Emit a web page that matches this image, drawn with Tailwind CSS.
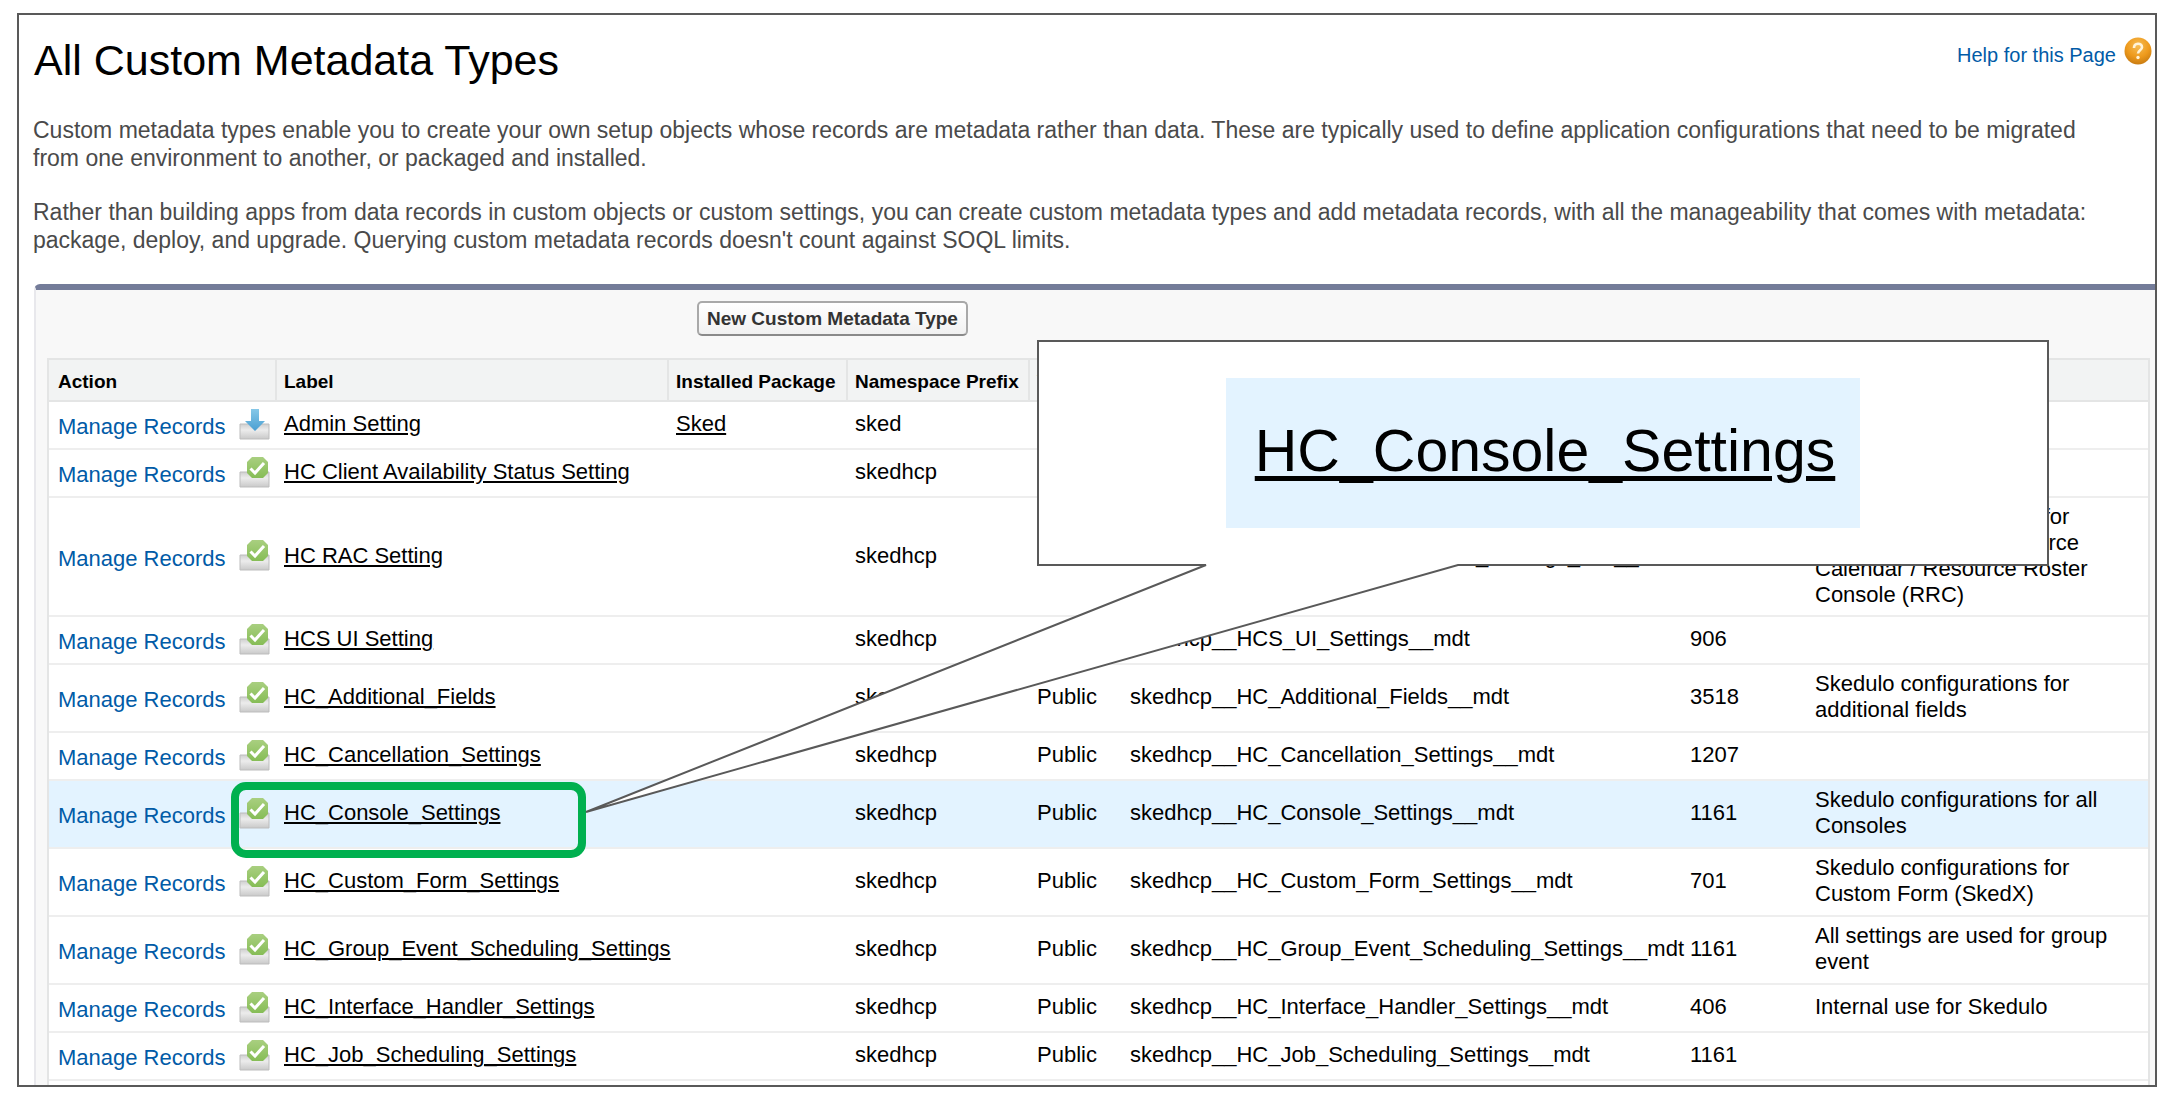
<!DOCTYPE html>
<html lang="en">
<head>
<meta charset="utf-8">
<title>All Custom Metadata Types</title>
<script src="https://cdn.jsdelivr.net/npm/@tailwindcss/browser@4"></script>
</head>
<body class="relative flex h-screen flex-col overflow-hidden bg-white px-[17px] pt-[13px] pb-[9px] font-['Liberation_Sans',Arial,sans-serif] text-black">

<svg class="absolute size-0" aria-hidden="true">
  <defs>
    <linearGradient id="tray" x1="0" y1="0" x2="0" y2="1"><stop offset="0" stop-color="#cfcfcf"/><stop offset=".4" stop-color="#ececec"/><stop offset="1" stop-color="#c9c9c9"/></linearGradient>
    <linearGradient id="green" x1="0" y1="0" x2="0" y2="1"><stop offset="0" stop-color="#a9cf80"/><stop offset="1" stop-color="#86bd56"/></linearGradient>
    <linearGradient id="blue" x1="0" y1="0" x2="0" y2="1"><stop offset="0" stop-color="#86c8e8"/><stop offset="1" stop-color="#4a9fd2"/></linearGradient>
    <radialGradient id="orange" cx=".5" cy=".3" r=".7"><stop offset="0" stop-color="#f6bd55"/><stop offset=".6" stop-color="#ee9a1c"/><stop offset="1" stop-color="#c97c12"/></radialGradient>
  </defs>
  <symbol id="ico-installed" viewBox="0 0 31 31">
    <path d="M1 15h29v15H1z" fill="url(#tray)" stroke="#bdbdbd"/>
    <path d="M12 0h8v12h6L16 22 6 12h6z" fill="url(#blue)"/>
  </symbol>
  <symbol id="ico-managed" viewBox="0 0 31 31">
    <path d="M1 15h29v15H1z" fill="url(#tray)" stroke="#bdbdbd"/>
    <path d="M13 0h11l5 5v11l-5 5H13l-5-5V5z" fill="url(#green)"/>
    <path d="M11.500 11.500l4.500 4.500 9-10" fill="none" stroke="#fff" stroke-width="3"/>
  </symbol>
</svg>

<main class="flex min-h-0 flex-1 flex-col overflow-hidden border-2 border-[#595959]">
  <header class="flex items-start justify-between pt-5 pr-[3px] pl-[15px]">
    <h1 class="text-[43px] leading-[50px]">All Custom Metadata Types</h1>
    <a href="#help" class="flex items-center gap-2 pt-1.5 text-xl text-[#015ba7]">Help for this Page
      <svg class="-mt-2 size-7" viewBox="0 0 28 28" aria-hidden="true"><circle cx="14" cy="14" r="13.500" fill="url(#orange)"/><path d="M10 11c0-5.500 8-5.500 8-.8 0 3-4 3-4 6.300" fill="none" stroke="#fff3d8" stroke-width="2.600"/><circle cx="14" cy="20.500" r="1.700" fill="#fff3d8"/></svg>
    </a>
  </header>

  <div class="mt-[31px] flex flex-col gap-[26px] pr-9 pl-[14px] text-[23px] leading-7 text-[#4a4a4a]">
    <p>Custom metadata types enable you to create your own setup objects whose records are metadata rather than data. These are typically used to define application configurations that need to be migrated from one environment to another, or packaged and installed.</p>
    <p>Rather than building apps from data records in custom objects or custom settings, you can create custom metadata types and add metadata records, with all the manageability that comes with metadata: package, deploy, and upgrade. Querying custom metadata records doesn't count against SOQL limits.</p>
  </div>

  <section class="mt-[30px] ml-[15px] flex-none rounded-tl-md border-t-6 border-l-2 border-t-[#747c99] border-l-[#e8e8ec] bg-[#f8f8f8] pr-[5px] pl-[11px]">
    <div class="flex pt-[11px] pb-[22px]">
      <button type="button" class="ml-[650px] h-[35px] rounded-[5px] border-2 border-[#a9a9a9] border-b-[#8a8a8a] bg-linear-to-b from-white to-[#f1f1f1] px-2 text-[19px] leading-none font-bold whitespace-nowrap text-[#333]">New Custom Metadata Type</button>
    </div>
    <div class="border-x-2 border-t-2 border-[#e4e5e5]">
      <table class="w-full table-fixed border-separate border-spacing-0 bg-white text-[22px] leading-[26px] whitespace-nowrap [&_td]:border-b-2 [&_td]:border-[#eeeeee] [&_td]:px-[9px] [&_td]:pt-0 [&_td]:pb-0.5 [&_td_a]:decoration-2 [&_td_a]:underline-offset-2 [&_th]:border-b-2 [&_th]:border-[#e4e5e5] [&_th]:px-[9px] [&_th]:pt-1 [&_th]:text-left [&_th]:text-[19px] [&_th+th]:border-l-2 [&_th+th]:pl-[7px]">
        <colgroup>
          <col class="w-[226px]"><col class="w-[392px]"><col class="w-[179px]"><col class="w-[182px]"><col class="w-[93px]"><col class="w-[560px]"><col class="w-[125px]"><col>
        </colgroup>
        <thead>
          <tr class="h-[42px] bg-[#f2f3f3]"><th>Action</th><th>Label</th><th>Installed Package</th><th>Namespace Prefix</th><th>Visibility</th><th>API Name</th><th>Record Size</th><th>Description</th></tr>
        </thead>
        <tbody>
          <tr class="h-12"><td><div class="-mr-1 flex items-center justify-between"><a href="#r1" class="pt-1.5 text-[#015ba7]">Manage Records</a><svg class="size-[31px]" aria-hidden="true"><use href="#ico-installed"/></svg></div></td><td><a href="#l1" class="underline">Admin Setting</a></td><td><a href="#sked" class="underline">Sked</a></td><td>sked</td><td>Public</td><td></td><td></td><td></td></tr>
          <tr class="h-12"><td><div class="-mr-1 flex items-center justify-between"><a href="#r2" class="pt-1.5 text-[#015ba7]">Manage Records</a><svg class="size-[31px]" aria-hidden="true"><use href="#ico-managed"/></svg></div></td><td><a href="#l2" class="underline">HC Client Availability Status Setting</a></td><td></td><td>skedhcp</td><td>Public</td><td></td><td></td><td></td></tr>
          <tr class="h-[119px]"><td><div class="-mr-1 flex items-center justify-between"><a href="#r3" class="pt-1.5 text-[#015ba7]">Manage Records</a><svg class="size-[31px]" aria-hidden="true"><use href="#ico-managed"/></svg></div></td><td><a href="#l3" class="underline">HC RAC Setting</a></td><td></td><td>skedhcp</td><td>Public</td><td>skedhcp__HC_Resource_Calendar_Settings_Old__mdt</td><td></td><td class="whitespace-normal"><div class="pr-7">Skedulo configurations for RAC Settings for Resource Calendar / Resource Roster Console (RRC)</div></td></tr>
          <tr class="h-12"><td><div class="-mr-1 flex items-center justify-between"><a href="#r4" class="pt-1.5 text-[#015ba7]">Manage Records</a><svg class="size-[31px]" aria-hidden="true"><use href="#ico-managed"/></svg></div></td><td><a href="#l4" class="underline">HCS UI Setting</a></td><td></td><td>skedhcp</td><td></td><td>skedhcp__HCS_UI_Settings__mdt</td><td>906</td><td></td></tr>
          <tr class="h-[68px]"><td><div class="-mr-1 flex items-center justify-between"><a href="#r5" class="pt-1.5 text-[#015ba7]">Manage Records</a><svg class="size-[31px]" aria-hidden="true"><use href="#ico-managed"/></svg></div></td><td><a href="#l5" class="underline">HC_Additional_Fields</a></td><td></td><td>skedhcp</td><td>Public</td><td>skedhcp__HC_Additional_Fields__mdt</td><td>3518</td><td class="whitespace-normal"><div class="pr-7">Skedulo configurations for additional fields</div></td></tr>
          <tr class="h-12"><td><div class="-mr-1 flex items-center justify-between"><a href="#r6" class="pt-1.5 text-[#015ba7]">Manage Records</a><svg class="size-[31px]" aria-hidden="true"><use href="#ico-managed"/></svg></div></td><td><a href="#l6" class="underline">HC_Cancellation_Settings</a></td><td></td><td>skedhcp</td><td>Public</td><td>skedhcp__HC_Cancellation_Settings__mdt</td><td>1207</td><td></td></tr>
          <tr class="h-[68px] bg-[#e3f3ff]"><td><div class="-mr-1 flex items-center justify-between"><a href="#r7" class="pt-1.5 text-[#015ba7]">Manage Records</a><svg class="size-[31px]" aria-hidden="true"><use href="#ico-managed"/></svg></div></td><td><a href="#l7" class="underline">HC_Console_Settings</a></td><td></td><td>skedhcp</td><td>Public</td><td>skedhcp__HC_Console_Settings__mdt</td><td>1161</td><td class="whitespace-normal"><div class="pr-7">Skedulo configurations for all Consoles</div></td></tr>
          <tr class="h-[68px]"><td><div class="-mr-1 flex items-center justify-between"><a href="#r8" class="pt-1.5 text-[#015ba7]">Manage Records</a><svg class="size-[31px]" aria-hidden="true"><use href="#ico-managed"/></svg></div></td><td><a href="#l8" class="underline">HC_Custom_Form_Settings</a></td><td></td><td>skedhcp</td><td>Public</td><td>skedhcp__HC_Custom_Form_Settings__mdt</td><td>701</td><td class="whitespace-normal"><div class="pr-7">Skedulo configurations for Custom Form (SkedX)</div></td></tr>
          <tr class="h-[68px]"><td><div class="-mr-1 flex items-center justify-between"><a href="#r9" class="pt-1.5 text-[#015ba7]">Manage Records</a><svg class="size-[31px]" aria-hidden="true"><use href="#ico-managed"/></svg></div></td><td><a href="#l9" class="underline">HC_Group_Event_Scheduling_Settings</a></td><td></td><td>skedhcp</td><td>Public</td><td>skedhcp__HC_Group_Event_Scheduling_Settings__mdt</td><td>1161</td><td class="whitespace-normal"><div class="pr-7">All settings are used for group event</div></td></tr>
          <tr class="h-12"><td><div class="-mr-1 flex items-center justify-between"><a href="#r10" class="pt-1.5 text-[#015ba7]">Manage Records</a><svg class="size-[31px]" aria-hidden="true"><use href="#ico-managed"/></svg></div></td><td><a href="#l10" class="underline">HC_Interface_Handler_Settings</a></td><td></td><td>skedhcp</td><td>Public</td><td>skedhcp__HC_Interface_Handler_Settings__mdt</td><td>406</td><td>Internal use for Skedulo</td></tr>
          <tr class="h-12"><td><div class="-mr-1 flex items-center justify-between"><a href="#r11" class="pt-1.5 text-[#015ba7]">Manage Records</a><svg class="size-[31px]" aria-hidden="true"><use href="#ico-managed"/></svg></div></td><td><a href="#l11" class="underline">HC_Job_Scheduling_Settings</a></td><td></td><td>skedhcp</td><td>Public</td><td>skedhcp__HC_Job_Scheduling_Settings__mdt</td><td>1161</td><td></td></tr>
        </tbody>
      </table>
      <div class="h-5 bg-white"></div>
    </div>
  </section>
</main>

<!-- Callout annotation over the table -->
<div class="absolute top-[782px] left-[231px] h-[76px] w-[355px] rounded-[15px] border-8 border-[#00b04f]"></div>
<svg class="absolute top-[339px] left-[580px] h-[480px] w-[1475px]" viewBox="580 339 1475 480" aria-hidden="true">
  <path d="M1038 341H2048V565H1458L586 812 1206 565H1038z" fill="#fff" stroke="#595959" stroke-width="2"/>
</svg>
<div class="absolute top-[378px] left-[1226px] flex h-[150px] w-[634px] items-center justify-center bg-[#e3f3ff] pb-1 pl-1">
  <a href="#l7" class="text-[59px] leading-[66px] underline decoration-5 underline-offset-5">HC_Console_Settings</a>
</div>
</body>
</html>
